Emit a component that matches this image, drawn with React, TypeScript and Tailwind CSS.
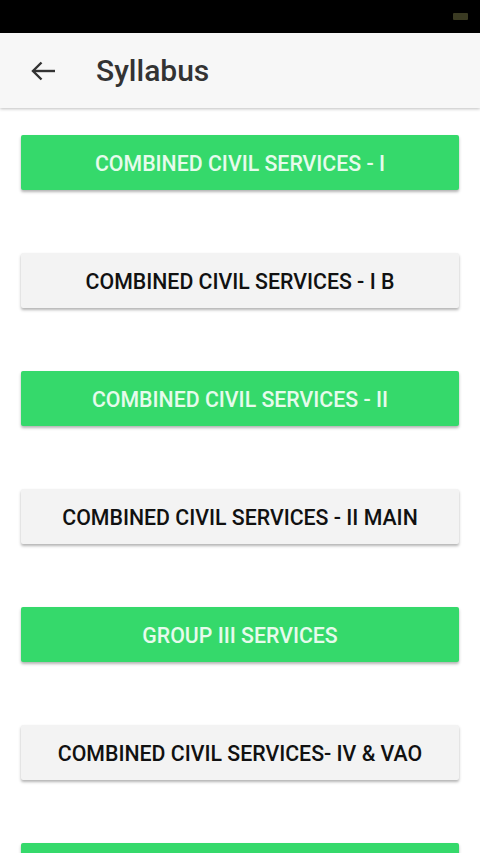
import React from "react";

const items: { label: string; green: boolean }[] = [
  { label: "COMBINED CIVIL SERVICES - I", green: true },
  { label: "COMBINED CIVIL SERVICES - I B", green: false },
  { label: "COMBINED CIVIL SERVICES - II", green: true },
  { label: "COMBINED CIVIL SERVICES - II MAIN", green: false },
  { label: "GROUP III SERVICES", green: true },
  { label: "COMBINED CIVIL SERVICES- IV & VAO", green: false },
  { label: "", green: true },
];

export default function App() {
  return (
    <div className="w-[480px] h-[853px] overflow-hidden bg-white flex flex-col" style={{ fontFamily: "Roboto, 'Liberation Sans', sans-serif" }}>
      <div className="h-[33px] bg-black flex items-center justify-end pr-[12px] shrink-0">
        <div className="w-[15px] h-[7px] rounded-[1px] bg-[#3a3a22]" />
      </div>
      <div className="h-[75px] bg-[#f7f7f7] flex items-center shrink-0 shadow-[0_1px_3px_rgba(0,0,0,0.25)] z-10 relative">
        <svg width="26" height="20" viewBox="0 0 26 20" className="ml-[30px]" fill="none" stroke="#333" strokeWidth="2.4">
          <path d="M3 10H25" />
          <path d="M11.5 1.5L3 10l8.5 8.5" />
        </svg>
        <div className="ml-[40px] text-[30px] font-medium text-[#333] leading-none">Syllabus</div>
      </div>
      <div className="flex flex-col gap-[63px] px-[21px] pt-[27px]">
        {items.map((it, i) => (
          <div
            key={i}
            className={
              "h-[55px] shrink-0 flex items-center justify-center pt-[2px] text-[21.3px] font-medium rounded-[2px] shadow-[0_2px_3px_rgba(0,0,0,0.3)] " +
              (it.green ? "bg-[#35d96b] text-[#e6fbec]" : "bg-[#f3f3f3] text-[#111]")
            }
          >
            {it.label}
          </div>
        ))}
      </div>
    </div>
  );
}
